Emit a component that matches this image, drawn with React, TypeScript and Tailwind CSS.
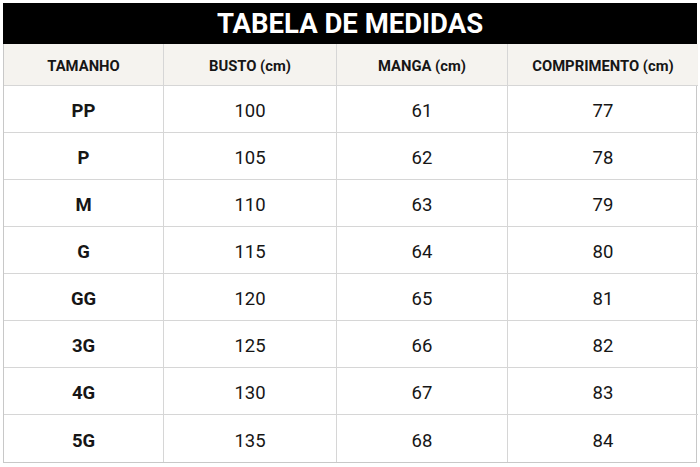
import React from "react";

const rows = [
  ["PP", "100", "61", "77"],
  ["P", "105", "62", "78"],
  ["M", "110", "63", "79"],
  ["G", "115", "64", "80"],
  ["GG", "120", "65", "81"],
  ["3G", "125", "66", "82"],
  ["4G", "130", "67", "83"],
  ["5G", "135", "68", "84"],
];

const headers = ["TAMANHO", "BUSTO (cm)", "MANGA (cm)", "COMPRIMENTO (cm)"];

export default function App() {
  return (
    <div
      className="w-[700px] h-[467px] bg-white pt-[3px] px-[3px] text-[#161616]"
      style={{ fontFamily: "Roboto, 'DejaVu Sans', sans-serif" }}
    >
      <div className="h-[41px] bg-black flex items-center justify-center pt-[1px]">
        <span className="text-white text-[27.5px] font-bold leading-none">
          TABELA DE MEDIDAS
        </span>
      </div>
      <div className="grid grid-cols-[160px_173px_171px_190px] border-x border-b border-[#c8c8c8]">
        {headers.map((h, i) => (
          <div
            key={h}
            className={`h-[42px] bg-[#f5f3ef] flex items-center justify-center pt-[3px] text-[14.8px] font-bold border-b border-[#d6d6d6] ${
              i < 3 ? "border-r" : ""
            }`}
          >
            {h}
          </div>
        ))}
        {rows.map((r, ri) =>
          r.map((c, ci) => (
            <div
              key={`${ri}-${ci}`}
              className={`h-[47px] flex items-center justify-center pt-[5px] text-[18.5px] leading-none border-[#d6d6d6] ${
                ci === 0 ? "font-bold" : "font-normal"
              } ${ci < 3 ? "border-r" : ""} ${ri < rows.length - 1 ? "border-b" : ""}`}
            >
              {c}
            </div>
          ))
        )}
      </div>
    </div>
  );
}
